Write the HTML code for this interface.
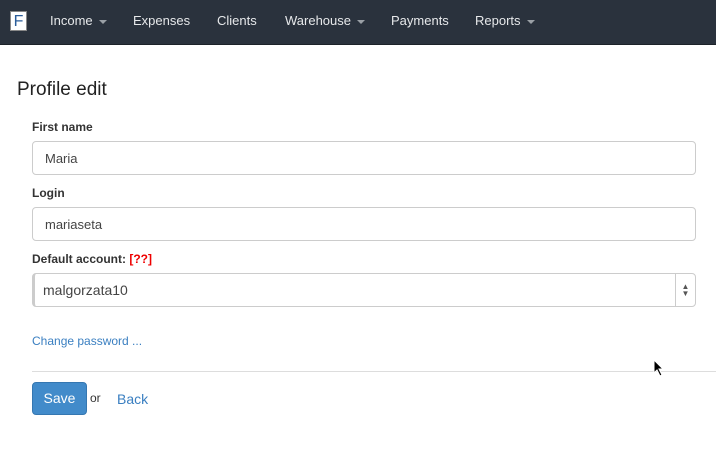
<!DOCTYPE html>
<html><head><style>
*{box-sizing:border-box;margin:0;padding:0}
body{width:716px;height:467px;background:#fff;font-family:"Liberation Sans",sans-serif;position:relative;overflow:hidden;color:#333}
.nav{position:absolute;left:0;top:0;width:716px;height:45px;background:#2a323d;border-bottom:1px solid #1c2229}
.nav span{position:absolute;top:13px;color:#e6e8ea;font-size:13px}
.caret{display:inline-block;width:0;height:0;border-left:4px solid transparent;border-right:4px solid transparent;border-top:4px solid #9aa0a6;margin-left:6px;vertical-align:middle}
.logo{position:absolute;left:10px;top:11px;width:17px;height:20px;background:#fff;border:1px solid #888;color:#2a5d9a;font-size:16px;text-align:center;line-height:19px}
h1{position:absolute;left:17px;top:79px;font-size:19px;font-weight:normal;color:#222}
.lbl{position:absolute;left:32px;font-size:12px;font-weight:bold;color:#333}
.in{position:absolute;left:32px;width:664px;height:34px;border:1px solid #ccc;border-radius:4px;font-size:13px;padding:9px 12px;color:#444}
a{color:#3a7fc1;text-decoration:none}
</style></head><body>
<div class="nav">
<div class="logo">F</div>
<span style="left:50px">Income<i class="caret"></i></span>
<span style="left:133px">Expenses</span>
<span style="left:217px">Clients</span>
<span style="left:285px">Warehouse<i class="caret"></i></span>
<span style="left:391px">Payments</span>
<span style="left:475px">Reports<i class="caret"></i></span>
</div>
<h1>Profile edit</h1>
<div class="lbl" style="top:120px">First name</div>
<div class="in" style="top:141px">Maria</div>
<div class="lbl" style="top:186px">Login</div>
<div class="in" style="top:207px">mariaseta</div>
<div class="lbl" style="top:252px">Default account: <span style="color:#e00">[??]</span></div>
<div class="in" style="top:273px;font-size:14px;padding:8px 8px;border-left:3px solid #ccc">malgorzata10
<div style="position:absolute;right:0;top:0;width:20px;height:32px;border-left:1px solid #ccc;font-size:8px;color:#555;text-align:center;line-height:7px;padding-top:9px">▲<br>▼</div></div>
<a style="position:absolute;left:32px;top:334px;font-size:12px">Change password ...</a>
<div style="position:absolute;left:32px;top:371px;width:684px;height:1px;background:#ddd"></div>
<div style="position:absolute;left:32px;top:382px;width:55px;height:33px;background:#428bca;border:1px solid #3577b1;border-radius:4px;color:#fff;font-size:14px;text-align:center;line-height:31px">Save</div>
<span style="position:absolute;left:90px;top:391px;font-size:12px">or</span>
<a style="position:absolute;left:117px;top:391px;font-size:14px">Back</a>
<svg style="position:absolute;left:653px;top:359px" width="12" height="18" viewBox="0 0 12 18"><path d="M1 1 L1 14 L4 11 L7 17 L9 16 L6 10 L10 10 Z" fill="#000" stroke="#fff" stroke-width="1"/></svg>
</body></html>
